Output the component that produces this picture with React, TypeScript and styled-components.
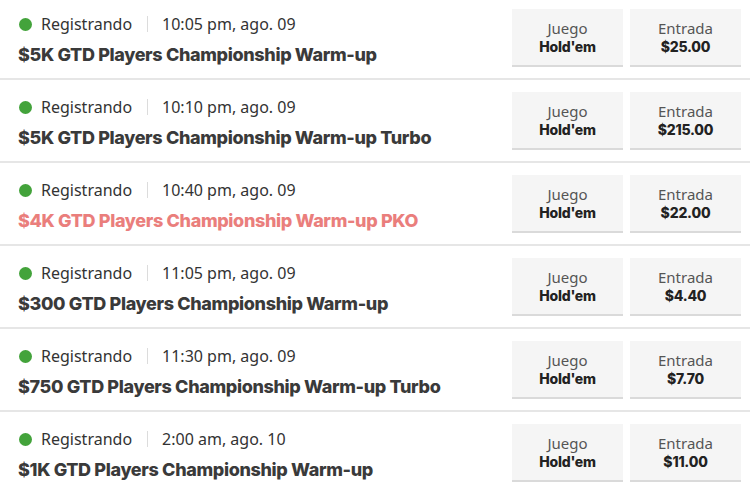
import React from "react";
import styled, { createGlobalStyle } from "styled-components";

const Global = createGlobalStyle`
  html, body { margin: 0; padding: 0; background: #ffffff; }
  body { font-family: "Inter", "Noto Sans", sans-serif; overflow: hidden; }
`;

const List = styled.div`
  width: 750px;
  margin-top: -3px;
  display: flex;
  flex-direction: column;
`;

const Row = styled.div`
  height: 83px;
  box-sizing: border-box;
  border-bottom: 2px solid #e6e6e6;
  display: flex;
  justify-content: space-between;
  align-items: flex-start;
  padding: 0 9px 0 18px;
`;

const Info = styled.div`
  display: flex;
  flex-direction: column;
  padding-top: 17px;
`;

const StatusLine = styled.div`
  display: flex;
  align-items: center;
  height: 20px;
  font-size: 16px;
  color: #333;
  font-family: "Noto Sans", "Inter", sans-serif;
`;

const Dot = styled.span`
  width: 13px;
  height: 13px;
  border-radius: 50%;
  background: #43a33b;
  margin: 0 9px 0 1px;
`;

const Sep = styled.span`
  width: 1px;
  height: 16px;
  background: #dcdcdc;
  margin: 0 14px 0 15px;
`;

const Title = styled.div<{ $highlight?: boolean }>`
  margin-top: 9px;
  font-size: 18px;
  line-height: 24px;
  font-weight: 800;
  letter-spacing: -0.35px;
  color: ${(p) => (p.$highlight ? "#ea7e7c" : "#3a3a3a")};
`;

const Boxes = styled.div`
  display: flex;
  gap: 7px;
  margin-top: 12px;
`;

const Box = styled.div`
  width: 111px;
  height: 58px;
  box-sizing: border-box;
  background: #f5f5f5;
  border-bottom: 2px solid #dadada;
  display: flex;
  flex-direction: column;
  align-items: center;
  justify-content: center;
  gap: 1px;
`;

const Label = styled.div`
  font-size: 15px;
  line-height: 17px;
  color: #555;
  font-family: "Noto Sans", "Inter", sans-serif;
`;

const Value = styled.div`
  font-size: 14px;
  line-height: 17px;
  font-weight: 800;
  letter-spacing: -0.2px;
  color: #222;
`;

const data = [
  { time: "10:05 pm, ago. 09", title: "$5K GTD Players Championship Warm-up", entry: "$25.00" },
  { time: "10:10 pm, ago. 09", title: "$5K GTD Players Championship Warm-up Turbo", entry: "$215.00" },
  { time: "10:40 pm, ago. 09", title: "$4K GTD Players Championship Warm-up PKO", entry: "$22.00", hl: true },
  { time: "11:05 pm, ago. 09", title: "$300 GTD Players Championship Warm-up", entry: "$4.40" },
  { time: "11:30 pm, ago. 09", title: "$750 GTD Players Championship Warm-up Turbo", entry: "$7.70" },
  { time: "2:00 am, ago. 10", title: "$1K GTD Players Championship Warm-up", entry: "$11.00" },
];

export default function App() {
  return (
    <>
      <Global />
      <List>
        {data.map((d, i) => (
          <Row key={i}>
            <Info>
              <StatusLine>
                <Dot />
                Registrando
                <Sep />
                {d.time}
              </StatusLine>
              <Title $highlight={d.hl}>{d.title}</Title>
            </Info>
            <Boxes>
              <Box>
                <Label>Juego</Label>
                <Value>Hold'em</Value>
              </Box>
              <Box>
                <Label>Entrada</Label>
                <Value>{d.entry}</Value>
              </Box>
            </Boxes>
          </Row>
        ))}
      </List>
    </>
  );
}
